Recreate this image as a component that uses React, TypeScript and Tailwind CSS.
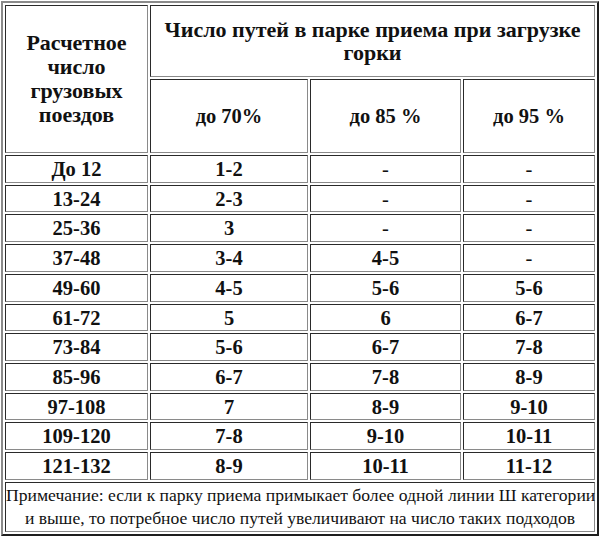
import React from "react";

const rows: [string, string, string, string, number][] = [
  ["До 12", "1-2", "-", "-", 28],
  ["13-24", "2-3", "-", "-", 27],
  ["25-36", "3", "-", "-", 28],
  ["37-48", "3-4", "4-5", "-", 28],
  ["49-60", "4-5", "5-6", "5-6", 28],
  ["61-72", "5", "6", "6-7", 27],
  ["73-84", "5-6", "6-7", "7-8", 28],
  ["85-96", "6-7", "7-8", "8-9", 28],
  ["97-108", "7", "8-9", "9-10", 27],
  ["109-120", "7-8", "9-10", "10-11", 28],
  ["121-132", "8-9", "10-11", "11-12", 28],
];

const cell =
  "p-0 text-center align-middle border border-t-[#2a2a2a] border-l-[#2a2a2a] border-b-[#8a8a8a] border-r-[#8a8a8a]";

export default function App() {
  return (
    <div className="w-[603px] h-[540px] bg-white pt-[1px] pl-[1px]" style={{ fontFamily: '"Liberation Serif", "Times New Roman", serif' }}>
      <table className="w-[598px] border-separate border-spacing-[2px] border-2 border-t-[#8a8a8a] border-l-[#8a8a8a] border-b-[#1e1e1e] border-r-[#1e1e1e] text-[#111] text-[20.5px] leading-[24px] font-bold table-fixed">
        <colgroup>
          <col className="w-[143px]" />
          <col className="w-[158px]" />
          <col className="w-[151px]" />
          <col className="w-[132px]" />
        </colgroup>
        <tbody>
          <tr>
            <td rowSpan={2} className={`${cell} text-[22px]`}>
              Расчетное
              <br />
              число
              <br />
              грузовых
              <br />
              поездов
            </td>
            <td colSpan={3} className={`${cell} h-[72px] text-[22px] leading-[23px]`}>
              Число путей в парке приема при загрузке
              <br />
              горки
            </td>
          </tr>
          <tr>
            <td className={`${cell} h-[74px]`}>до 70%</td>
            <td className={cell}>до 85 %</td>
            <td className={cell}>до 95 %</td>
          </tr>
          {rows.map(([a, b, c, d, h]) => (
            <tr key={a}>
              <td className={cell} style={{ height: h }}>{a}</td>
              <td className={cell}>{b}</td>
              <td className={`${cell} ${c === "-" ? "font-normal" : ""}`}>{c}</td>
              <td className={`${cell} ${d === "-" ? "font-normal" : ""}`}>{d}</td>
            </tr>
          ))}
          <tr>
            <td colSpan={4} className={`${cell} h-[50px] font-normal text-[17.6px] leading-[23px] whitespace-nowrap`}>
              Примечание: если к парку приема примыкает более одной линии Ш категории
              <br />
              и выше, то потребное число путей увеличивают на число таких подходов
            </td>
          </tr>
        </tbody>
      </table>
    </div>
  );
}
